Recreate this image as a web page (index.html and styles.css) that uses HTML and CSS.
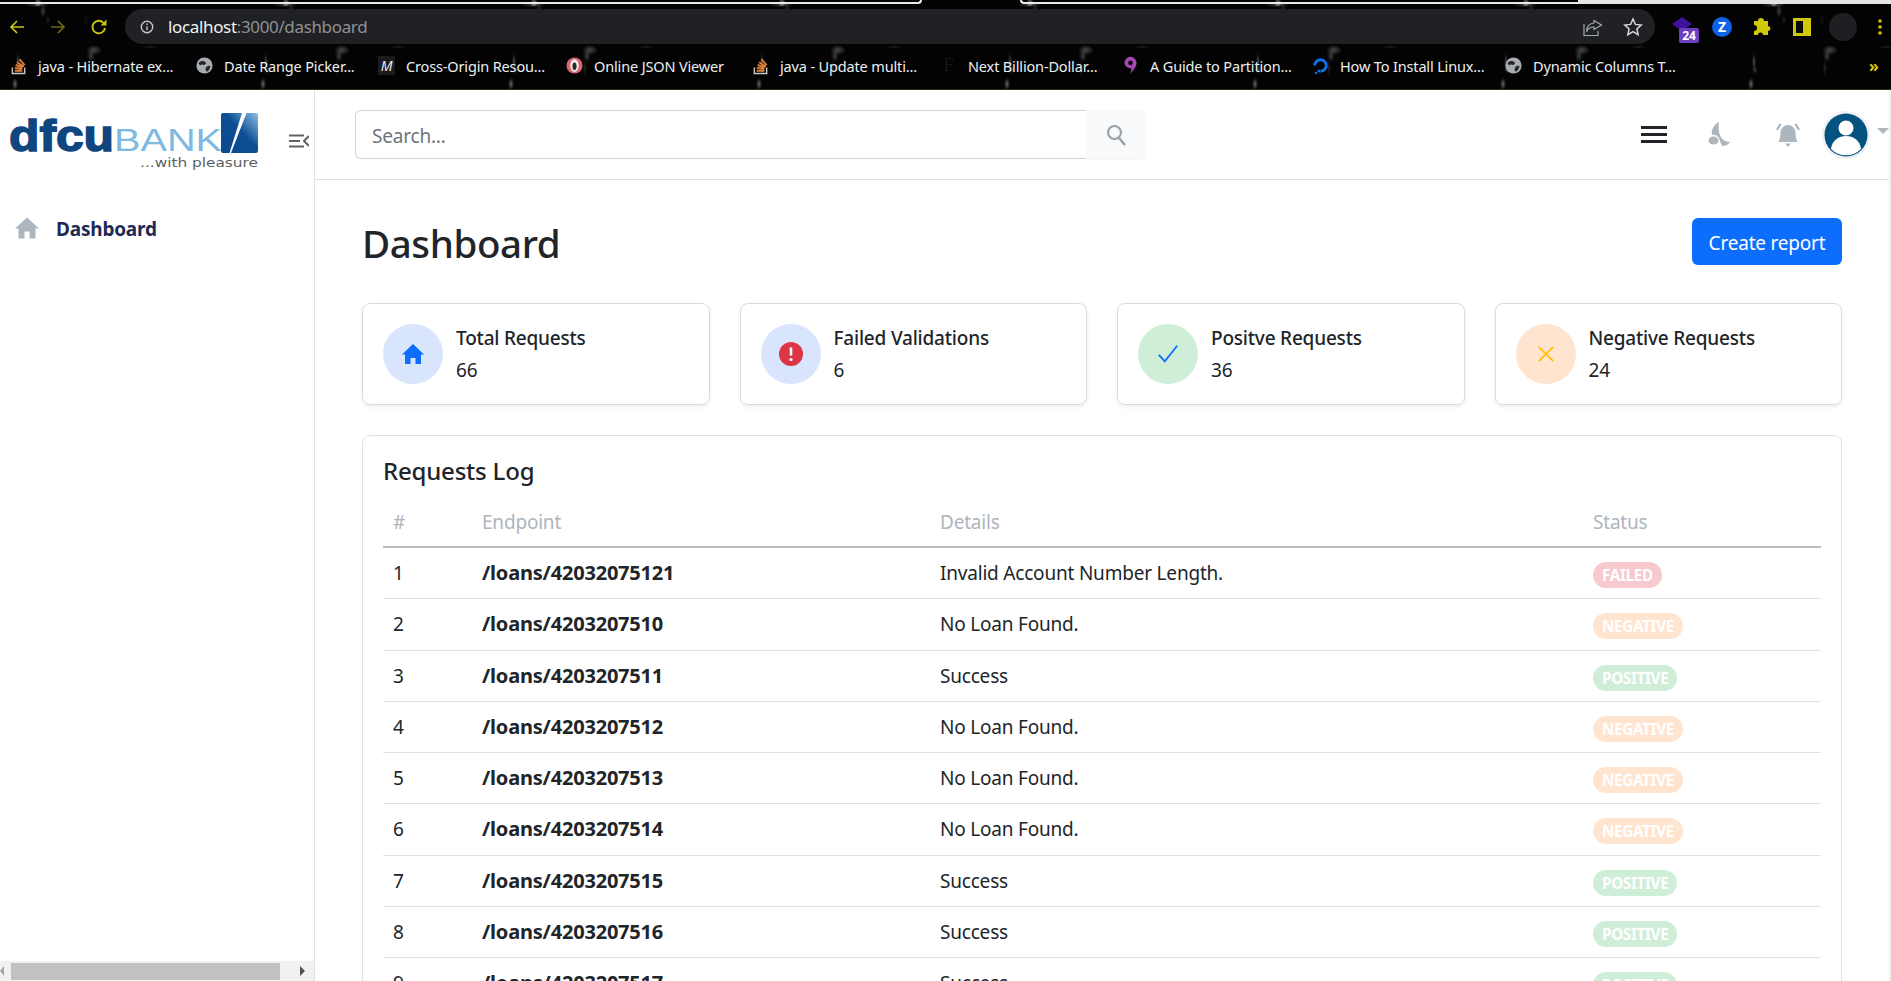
FILE: index.html
```html
<!DOCTYPE html>
<html lang="en">
<head>
<meta charset="utf-8">
<title>Dashboard</title>
<link rel="stylesheet" href="styles.css">
</head>
<body>
<div class="browser">
  <div class="tabstrip">
    <div class="tab tab-a"></div>
    <div class="tab tab-b"></div>
    <div class="tab-rest"></div>
  </div>
  <div class="toolbar">
    <div class="nav">
      <svg class="nav-icon" viewBox="0 0 18 18"><path d="M16 9H3M9 3 3 9l6 6" fill="none" stroke="#c9c70f" stroke-width="1.7"/></svg>
      <svg class="nav-icon dim" viewBox="0 0 18 18"><path d="M2 9h13M9 3l6 6-6 6" fill="none" stroke="#6b6a10" stroke-width="1.7"/></svg>
      <svg class="nav-icon" viewBox="0 0 18 18"><path d="M15 10a6.3 6.3 0 1 1-1.6-5.2" fill="none" stroke="#c9c70f" stroke-width="1.9"/><path d="M16.500 1.500v6h-6z" fill="#c9c70f"/></svg>
    </div>
    <div class="omnibox">
      <svg class="info" viewBox="0 0 14 14"><circle cx="7" cy="7" r="5.700" fill="none" stroke="#c4c7c5" stroke-width="1.400"/><path d="M7 6.200v4M7 3.500v1.500" stroke="#c4c7c5" stroke-width="1.400"/></svg>
      <span class="url"><span class="host">localhost</span>:3000/dashboard</span>
      <svg class="omni-icon share" viewBox="0 0 20 20"><path d="M11 3.500 18.500 8 11 12.500V10C7 10 4.500 12 3.500 15 3.500 10 6 6.500 11 6z" fill="none" stroke="#a5a8ab" stroke-width="1.200"/><path d="M1 7v11.500h14V14" fill="none" stroke="#a5a8ab" stroke-width="1.200"/></svg>
      <svg class="omni-icon star" viewBox="0 0 20 20"><path d="m10 2 2.400 5.400 5.800.6-4.300 3.900 1.200 5.800L10 14.700l-5.100 3 1.200-5.800L1.800 8l5.800-.6z" fill="none" stroke="#d6d8da" stroke-width="1.500"/></svg>
    </div>
    <div class="extensions">
      <svg class="ext ext-stack" viewBox="0 0 28 28"><path d="M11 1l10 7-10 7L1 8z" fill="#3f129e"/><rect x="8" y="12" width="20" height="15" rx="2" fill="#6b3fc0"/><text x="18" y="24" class="ext-num">24</text></svg>
      <svg class="ext ext-z" viewBox="0 0 20 20"><circle cx="10" cy="10" r="10" fill="#0f62e6"/><text x="10" y="15" class="ext-z-letter">Z</text></svg>
      <svg class="ext ext-puzzle" viewBox="0 0 20 20"><path d="M7 4a3 3 0 0 1 6 0h4v5a2.500 2.500 0 0 1 0 5v4h-5a2.500 2.500 0 0 0-5 0H3v-4a3 3 0 0 0 0-6V4z" fill="#cfc90a"/></svg>
      <svg class="ext ext-panel" viewBox="0 0 18 18"><path d="M0 0h18v18H0z" fill="#cfc90a"/><path d="M3 3h7v12H3z" fill="#0b0b0b"/></svg>
      <div class="profile-dot"></div>
      <svg class="ext ext-dots" viewBox="0 0 4 16"><circle cx="2" cy="2" r="1.800" fill="#cfc90a"/><circle cx="2" cy="8" r="1.800" fill="#cfc90a"/><circle cx="2" cy="14" r="1.800" fill="#cfc90a"/></svg>
    </div>
  </div>
  <div class="bookmarks">
    <div class="bm"><svg class="bm-icon" viewBox="0 0 16 20"><path d="M1.500 12v6.500h13V12" fill="none" stroke="#c9c4bd" stroke-width="1.500"/><path d="M4 15.500h8M4 12.500l8 1M5 9.500l7.500 2.500M6.500 6.500l7 4.500M9 3.500l5.500 6" stroke="#e07f36" stroke-width="2"/></svg><span>java - Hibernate ex...</span></div>
    <div class="bm"><svg class="bm-icon" viewBox="0 0 20 20"><circle cx="10" cy="10" r="9.500" fill="#a9adb1"/><path d="M3 7c3-3 6-3 8-1s-1 4-3 3-3 3-5-2zM12 12c2-2 5-2 5-1s-2 6-4 6-2-3-1-5z" fill="#23252a"/></svg><span>Date Range Picker...</span></div>
    <div class="bm"><div class="bm-m">M</div><span>Cross-Origin Resou...</span></div>
    <div class="bm"><svg class="bm-icon" viewBox="0 0 20 20"><circle cx="10" cy="10" r="9.500" fill="#d9646b"/><ellipse cx="10" cy="10" rx="5" ry="7.500" fill="#f2e9e9"/><ellipse cx="10" cy="11" rx="2.400" ry="4.500" fill="#2a2a2e"/></svg><span>Online JSON Viewer</span></div>
    <div class="bm"><svg class="bm-icon" viewBox="0 0 16 20"><path d="M1.500 12v6.500h13V12" fill="none" stroke="#c9c4bd" stroke-width="1.500"/><path d="M4 15.500h8M4 12.500l8 1M5 9.500l7.500 2.500M6.500 6.500l7 4.500M9 3.500l5.500 6" stroke="#e07f36" stroke-width="2"/></svg><span>java - Update multi...</span></div>
    <div class="bm"><div class="bm-ghost">F</div><span>Next Billion-Dollar...</span></div>
    <div class="bm"><svg class="bm-icon" viewBox="0 0 16 22"><path d="M8 1a7 7 0 0 1 7 7c0 5-5 9-7 13 0 0 1-4 1-7A6.500 6.500 0 0 1 1 8a7 7 0 0 1 7-7z" fill="#a646b8"/><circle cx="8" cy="8" r="2.700" fill="#0b0b0b"/></svg><span>A Guide to Partition...</span></div>
    <div class="bm"><svg class="bm-icon" viewBox="0 0 20 20"><path d="M10 18.500a8.500 8.500 0 1 0-8.500-8.500h3.400A5.100 5.100 0 1 1 10 15.100z" fill="#0c74e8"/><path d="M6.500 15h3v3h-3zM3.500 17.500H6V20H3.500z" fill="#0c74e8"/></svg><span>How To Install Linux...</span></div>
    <div class="bm"><svg class="bm-icon" viewBox="0 0 20 20"><circle cx="10" cy="10" r="9.500" fill="#a9adb1"/><path d="M3 7c3-3 6-3 8-1s-1 4-3 3-3 3-5-2zM12 12c2-2 5-2 5-1s-2 6-4 6-2-3-1-5z" fill="#23252a"/></svg><span>Dynamic Columns T...</span></div>
    <div class="bm-more">»</div>
  </div>
</div>
<div class="app">
  <aside class="sidebar">
    <div class="brand">
      <svg class="logo" viewBox="0 0 250 68">
        <defs>
          <linearGradient id="logoGrad" x1="0" y1="1" x2="1" y2="0">
            <stop offset="0" stop-color="#0b4a8e"/>
            <stop offset=".55" stop-color="#0d4f94"/>
            <stop offset="1" stop-color="#8fc0e6"/>
          </linearGradient>
        </defs>
        <text x="0" y="46" class="logo-dfcu" textLength="105" lengthAdjust="spacingAndGlyphs">dfcu</text>
        <text x="105" y="46" class="logo-bank" textLength="108" lengthAdjust="spacingAndGlyphs">BANK</text>
        <rect x="212" y="8" width="37" height="40" rx="2" fill="url(#logoGrad)"/>
        <path d="M233 8h4.500L222 48h-1.500z" fill="#fff"/>
        <text x="249" y="62" class="logo-tag" text-anchor="end" textLength="118" lengthAdjust="spacingAndGlyphs">...with pleasure</text>
      </svg>
      <svg class="collapse" viewBox="0 0 20 14"><path d="M0 1.500h15M0 7h11M0 12.500h15M20 2l-5 5 5 5" fill="none" stroke="#5f6368" stroke-width="2"/></svg>
    </div>
    <nav class="side-nav">
      <a class="side-link">
        <svg class="side-home" viewBox="0 0 24 21"><path d="M12 0 0 11h3.500v10h6v-7h5v7h6V11H24z" fill="#adb5bd"/></svg>
        <span>Dashboard</span>
      </a>
    </nav>
    <div class="h-scroll">
      <span class="arrow arrow-left"></span>
      <div class="thumb"></div>
      <span class="arrow arrow-right"></span>
    </div>
  </aside>
  <div class="main">
    <header class="topbar">
      <div class="search">
        <div class="search-input">Search...</div>
        <div class="search-btn">
          <svg class="search-icon" viewBox="0 0 20 22"><circle cx="8.500" cy="8.500" r="6.500" fill="none" stroke="#9aa1a8" stroke-width="2.200"/><path d="m13 14 6 7" stroke="#9aa1a8" stroke-width="2.600"/></svg>
        </div>
      </div>
      <div class="top-actions">
        <svg class="burger" viewBox="0 0 26 17"><path d="M0 1.500h26M0 8.500h26M0 15.500h26" stroke="#212529" stroke-width="3"/></svg>
        <svg class="moon" viewBox="0 0 22 25"><path d="M11 0C5 3 3 9 4 13C6 12 9 13 11 16C12 19 13 22 14 24C17 24 20 23 22 20C16 20 12 16 11 10C10.500 7 10.500 3 11 0Z" fill="#adb5bd"/><ellipse cx="5.500" cy="18.500" rx="5" ry="4" fill="#adb5bd"/></svg>
        <svg class="bell" viewBox="0 0 24 24"><path d="M12 2a7.500 7.500 0 0 1 7.500 7.500c0 4 .5 7 2 9.500h-19c1.500-2.500 2-5.500 2-9.500A7.500 7.500 0 0 1 12 2z" fill="#adb5bd"/><path d="M9 20.500h6L12 24z" fill="#adb5bd"/><path d="M4.500 1 1 7M19.500 1 23 7" stroke="#adb5bd" stroke-width="2.200" fill="none"/></svg>
        <div class="user">
          <svg class="avatar" viewBox="0 0 48 48"><circle cx="24" cy="24" r="24" fill="#eef0f1"/><circle cx="24" cy="24" r="21.500" fill="#04527f"/><circle cx="24" cy="17" r="7.500" fill="#fff"/><path d="M9 38c1-9 8-13 15-13s14 4 15 13a21 21 0 0 1-30 0z" fill="#fff"/></svg>
          <span class="caret"></span>
        </div>
      </div>
    </header>
    <main class="content">
      <div class="page-head">
        <h1>Dashboard</h1>
        <button class="btn-report">Create report</button>
      </div>
      <section class="stats">
        <div class="stat">
          <div class="stat-circle c-blue"><svg class="i-house" viewBox="0 0 22 20"><path d="M11 0 0 10.500h3V20h5.500v-6h5v6H19v-9.500h3z" fill="#0d6efd"/></svg></div>
          <div class="stat-text"><div class="stat-title">Total Requests</div><div class="stat-num">66</div></div>
        </div>
        <div class="stat">
          <div class="stat-circle c-blue"><svg class="i-alert" viewBox="0 0 24 24"><circle cx="12" cy="12" r="12" fill="#dc3545"/><path d="M12 5.500v8" stroke="#fff" stroke-width="2.600"/><circle cx="12" cy="17.500" r="1.600" fill="#fff"/></svg></div>
          <div class="stat-text"><div class="stat-title">Failed Validations</div><div class="stat-num">6</div></div>
        </div>
        <div class="stat">
          <div class="stat-circle c-green"><svg class="i-check" viewBox="0 0 24 24"><path d="m2 13 6.500 7L22 3" fill="none" stroke="#0d6efd" stroke-width="2"/></svg></div>
          <div class="stat-text"><div class="stat-title">Positve Requests</div><div class="stat-num">36</div></div>
        </div>
        <div class="stat">
          <div class="stat-circle c-orange"><svg class="i-x" viewBox="0 0 20 20"><path d="m2 2 16 16M18 2 2 18" fill="none" stroke="#ffc107" stroke-width="2"/></svg></div>
          <div class="stat-text"><div class="stat-title">Negative Requests</div><div class="stat-num">24</div></div>
        </div>
      </section>
      <section class="log">
        <h2>Requests Log</h2>
        <table class="log-table">
          <colgroup><col class="c1"><col class="c2"><col class="c3"><col class="c4"></colgroup>
          <thead><tr><th>#</th><th>Endpoint</th><th>Details</th><th>Status</th></tr></thead>
          <tbody>
            <tr><td>1</td><td class="ep">/loans/42032075121</td><td>Invalid Account Number Length.</td><td><span class="pill failed">FAILED</span></td></tr>
            <tr><td>2</td><td class="ep">/loans/4203207510</td><td>No Loan Found.</td><td><span class="pill negative">NEGATIVE</span></td></tr>
            <tr><td>3</td><td class="ep">/loans/4203207511</td><td>Success</td><td><span class="pill positive">POSITIVE</span></td></tr>
            <tr><td>4</td><td class="ep">/loans/4203207512</td><td>No Loan Found.</td><td><span class="pill negative">NEGATIVE</span></td></tr>
            <tr><td>5</td><td class="ep">/loans/4203207513</td><td>No Loan Found.</td><td><span class="pill negative">NEGATIVE</span></td></tr>
            <tr><td>6</td><td class="ep">/loans/4203207514</td><td>No Loan Found.</td><td><span class="pill negative">NEGATIVE</span></td></tr>
            <tr><td>7</td><td class="ep">/loans/4203207515</td><td>Success</td><td><span class="pill positive">POSITIVE</span></td></tr>
            <tr><td>8</td><td class="ep">/loans/4203207516</td><td>Success</td><td><span class="pill positive">POSITIVE</span></td></tr>
            <tr><td>9</td><td class="ep">/loans/4203207517</td><td>Success</td><td><span class="pill positive">POSITIVE</span></td></tr>
          </tbody>
        </table>
      </section>
    </main>
  </div>
</div>
</body>
</html>
```

FILE: styles.css
```css
* { box-sizing: border-box; }
html, body { margin: 0; height: 100%; }
body {
  display: flex;
  flex-direction: column;
  height: 100vh;
  overflow: hidden;
  background: #fff;
  color: #212529;
  font-family: "Noto Sans", "Open Sans", sans-serif;
  font-size: 19px;
  letter-spacing: -0.2px;
}

/* browser chrome */
.browser {
  flex: none;
  height: 90px;
  display: flex;
  flex-direction: column;
  border-bottom: 1px solid #2a2a10;
  background-color: #030304;
  background-image:
    radial-gradient(ellipse 4px 4px at 38px 3px, rgba(255,255,255,.6), transparent),
    radial-gradient(ellipse 13px 2px at 38px 5px, rgba(255,255,255,.25), transparent),
    radial-gradient(ellipse 3px 7px at 43px 11px, rgba(255,255,255,.22), transparent),
    radial-gradient(ellipse 2px 5px at 48px 20px, rgba(255,255,255,.12), transparent),
    radial-gradient(ellipse 8px 5px at 94px 50px, rgba(255,255,255,.28), transparent),
    radial-gradient(ellipse 4px 6px at 91px 56px, rgba(255,255,255,.22), transparent),
    radial-gradient(ellipse 2px 8px at 89px 68px, rgba(255,255,255,.14), transparent),
    radial-gradient(ellipse 2px 9px at 18px 62px, rgba(255,255,255,.28), transparent),
    radial-gradient(ellipse 3px 4px at 19px 70px, rgba(255,255,255,.2), transparent),
    radial-gradient(ellipse 3px 6px at 15px 84px, rgba(255,255,255,.38), transparent),
    radial-gradient(ellipse 9px 2px at 150px 47px, rgba(255,255,255,.1), transparent),
    radial-gradient(ellipse 2px 7px at 86px 20px, rgba(255,255,255,.06), transparent);
  background-size: 248px 90px;
}
.tabstrip { flex: none; height: 9px; display: flex; align-items: flex-start; }
.tab { height: 4px; border-bottom: 2px solid #e9e9e9; }
.tab-a { width: 922px; border-right: 2px solid #e9e9e9; border-bottom-right-radius: 5px; }
.tab-b { width: 558px; margin-left: 98px; border-left: 2px solid #e9e9e9; border-bottom-left-radius: 5px; }
.tab-rest { flex: 1; height: 4px; background: #e4e4e4; }

.toolbar { flex: none; height: 35px; display: flex; align-items: center; }
.nav { flex: none; width: 125px; display: flex; align-items: center; gap: 23px; padding-left: 8px; }
.nav-icon { width: 18px; height: 18px; }
.omnibox {
  flex: none;
  width: 1530px;
  height: 35px;
  display: flex;
  align-items: center;
  background: #202124;
  border-radius: 18px;
  padding-left: 15px;
}
.info { width: 14px; height: 14px; margin-right: 14px; flex: none; }
.url { font-family: "Noto Sans", sans-serif; font-size: 17px; color: #8e9194; letter-spacing: -0.35px; }
.host { color: #f1f3f4; }
.omni-icon { width: 20px; height: 20px; flex: none; }
.share { margin-left: auto; }
.star { margin-left: 20px; margin-right: 12px; }
.extensions { flex: 1; position: relative; display: flex; align-items: center; padding-left: 16px; }
.ext { flex: none; }
.ext-stack { width: 28px; height: 28px; margin-top: 6px; }
.ext-num { font: 700 12px "Noto Sans", sans-serif; fill: #fff; text-anchor: middle; letter-spacing: 0; }
.ext-z { width: 20px; height: 20px; margin-left: 13px; overflow: visible; }
.ext-z-letter { font: 700 14px/1 "Noto Sans", sans-serif; fill: #fff; text-anchor: middle; letter-spacing: 0; }
.ext-puzzle { width: 20px; height: 20px; margin-left: 19px; }
.ext-panel { width: 18px; height: 18px; margin-left: 22px; }
.profile-dot { width: 28px; height: 28px; border-radius: 50%; background: #1e1f22; margin-left: 18px; flex: none; }
.ext-dots { width: 4px; height: 16px; margin-left: 21px; }

.bookmarks {
  flex: 1;
  display: grid;
  grid-template-columns: 186px 182px 188px 186px 188px 182px 190px 193px 1fr 22px;
  align-items: center;
  padding: 0 0 2px 10px;
  font-size: 14.500px;
  color: #eceff1;
  letter-spacing: -0.15px;
}
.bm { display: flex; align-items: center; gap: 11px; white-space: nowrap; min-width: 0; }
.bm-icon { width: 17px; height: 19px; flex: none; }
.bm-m { width: 17px; height: 19px; flex: none; background: #1b1b1f; color: #e8e8e8; font-size: 14px; font-style: italic; line-height: 19px; text-align: center; }
.bm-ghost { width: 17px; height: 19px; flex: none; color: #161616; font: 18px/19px "Liberation Serif", serif; text-align: center; }
.bm-more { color: #cfc90a; font-size: 16px; font-weight: 700; }

/* app shell */
.app { flex: 1; min-height: 0; display: flex; }
.sidebar {
  flex: none;
  width: 315px;
  display: flex;
  flex-direction: column;
  border-right: 1px solid #dee2e6;
}
.brand { flex: none; height: 89px; display: flex; align-items: flex-start; padding: 15px 0 0 9px; }
.logo { width: 250px; height: 68px; flex: none; }
.logo-dfcu { font: 700 44px "Liberation Sans", Arial, sans-serif; fill: #0f4680; stroke: #0f4680; stroke-width: 1.500px; letter-spacing: 0; }
.logo-bank { font: 400 31px "Liberation Sans", Arial, sans-serif; fill: #7db9e0; letter-spacing: 0; }
.logo-tag { font: 400 12px "DejaVu Sans", sans-serif; fill: #5b5f63; letter-spacing: 0; }
.collapse { width: 20px; height: 14px; margin: 29px 0 0 30px; flex: none; }
.side-nav { flex: 1; padding: 37px 0 0 15px; }
.side-link { display: flex; align-items: center; gap: 17px; color: #1f2a52; font-weight: 700; font-size: 19px; }
.side-home { width: 24px; height: 22px; flex: none; margin-top: -3px; }
.h-scroll { flex: none; height: 20px; display: flex; align-items: center; background: #f1f1f1; }
.thumb { width: 269px; height: 17px; margin-left: 7px; background: #c1c1c1; }
.arrow { width: 0; height: 0; border-style: solid; border-width: 5px 0 5px 5px; border-color: transparent transparent transparent #505050; flex: none; }
.arrow-left { border-width: 5px 4px 5px 0; border-color: transparent #a3a3a3 transparent transparent; }
.arrow-right { margin-left: 20px; }

.main { flex: 1; min-width: 0; display: flex; flex-direction: column; border-right: 2px solid #f1f1f1; }
.topbar { flex: none; height: 90px; display: flex; align-items: flex-start; border-bottom: 1px solid #dee2e6; padding: 20px 0 0 40px; }
.search { display: flex; flex: none; }
.search-input {
  width: 731px;
  height: 49px;
  display: flex;
  align-items: center;
  padding: 2px 0 0 16px;
  border: 1px solid #ced4da;
  border-right: 0;
  border-radius: 6px 0 0 6px;
  color: #6c757d;
}
.search-btn {
  width: 59px;
  height: 49px;
  display: flex;
  align-items: center;
  justify-content: center;
  background: #f8f9fa;
  border-radius: 0 6px 6px 0;
  box-shadow: 0 1px 2px rgba(0,0,0,.06);
}
.search-icon { width: 20px; height: 22px; }
.top-actions { flex: 1; display: flex; align-items: center; height: 49px; padding-left: 496px; }
.burger { width: 26px; height: 17px; flex: none; margin-top: -1px; }
.moon { width: 24px; height: 25px; flex: none; margin-left: 40px; }
.bell { width: 24px; height: 24px; flex: none; margin-left: 45px; }
.user { display: flex; align-items: center; margin-left: 22px; flex: none; }
.avatar { width: 48px; height: 48px; flex: none; }
.caret { width: 0; height: 0; border-style: solid; border-width: 6px 6px 0; border-color: #adb5bd transparent transparent; margin: -8px 0 0 7px; }

.content { flex: 1; min-height: 0; padding: 37px 47px 0 47px; overflow: hidden; }
.page-head { display: flex; justify-content: space-between; align-items: flex-start; height: 49px; margin-bottom: 37px; }
h1 { margin: 0; padding-top: 2px; font-size: 38.500px; font-weight: 500; line-height: 48px; letter-spacing: -0.4px; }
.btn-report {
  width: 150px;
  height: 47px;
  margin-top: 1px;
  padding: 3px 0 0;
  border: 0;
  border-radius: 6px;
  background: #0d6efd;
  color: #fff;
  font: inherit;
  letter-spacing: inherit;
}
.stats { display: grid; grid-template-columns: repeat(4, 1fr); gap: 30px; }
.stat {
  height: 102px;
  display: flex;
  align-items: center;
  gap: 13px;
  padding: 0 20px;
  border: 1px solid #d9dcdf;
  border-radius: 8px;
  box-shadow: 0 2px 4px rgba(0,0,0,.075);
}
.stat-circle { width: 60px; height: 60px; border-radius: 50%; display: flex; align-items: center; justify-content: center; flex: none; }
.c-blue { background: #d8e5fc; }
.c-green { background: #cfeed8; }
.c-orange { background: #ffe5d0; }
.i-house { width: 22px; height: 20px; }
.i-alert { width: 24px; height: 24px; }
.i-check { width: 22px; height: 22px; }
.i-x { width: 18px; height: 18px; }
.stat-text { padding-top: 1px; }
.stat-title { font-weight: 500; line-height: 30px; }
.stat-num { padding-top: 1px; line-height: 32px; }

.log { margin-top: 30px; padding: 20px 20px 0; border: 1px solid #dee2e6; border-radius: 8px; }
h2 { margin: 0; font-size: 24px; font-weight: 500; line-height: 30px; letter-spacing: -0.2px; }
.log-table { width: 100%; margin-top: 10px; border-collapse: collapse; table-layout: fixed; }
.c1 { width: 89px; }
.c2 { width: 458px; }
.c3 { width: 653px; }
.log-table th { padding: 11px 10px 9px; text-align: left; font-weight: 400; color: #adb5bd; line-height: 30px; border-bottom: 2px solid #b8bcc0; }
.log-table td { padding: 10px; line-height: 30px; border-bottom: 1px solid #dee2e6; white-space: nowrap; }
.log-table tr:nth-child(4n+2) td { padding-bottom: 11px; }
.log-table td.ep { font-size: 20px; font-weight: 700; }
.pill {
  display: inline-block;
  padding: 0 9px;
  border-radius: 14px;
  color: #fff;
  font-size: 15.200px;
  font-weight: 700;
  line-height: 26px;
  letter-spacing: -0.3px;
  vertical-align: middle;
}
.failed { background: #f8c9ce; }
.negative { background: #ffe5d0; }
.positive { background: #cfeed8; }
```
